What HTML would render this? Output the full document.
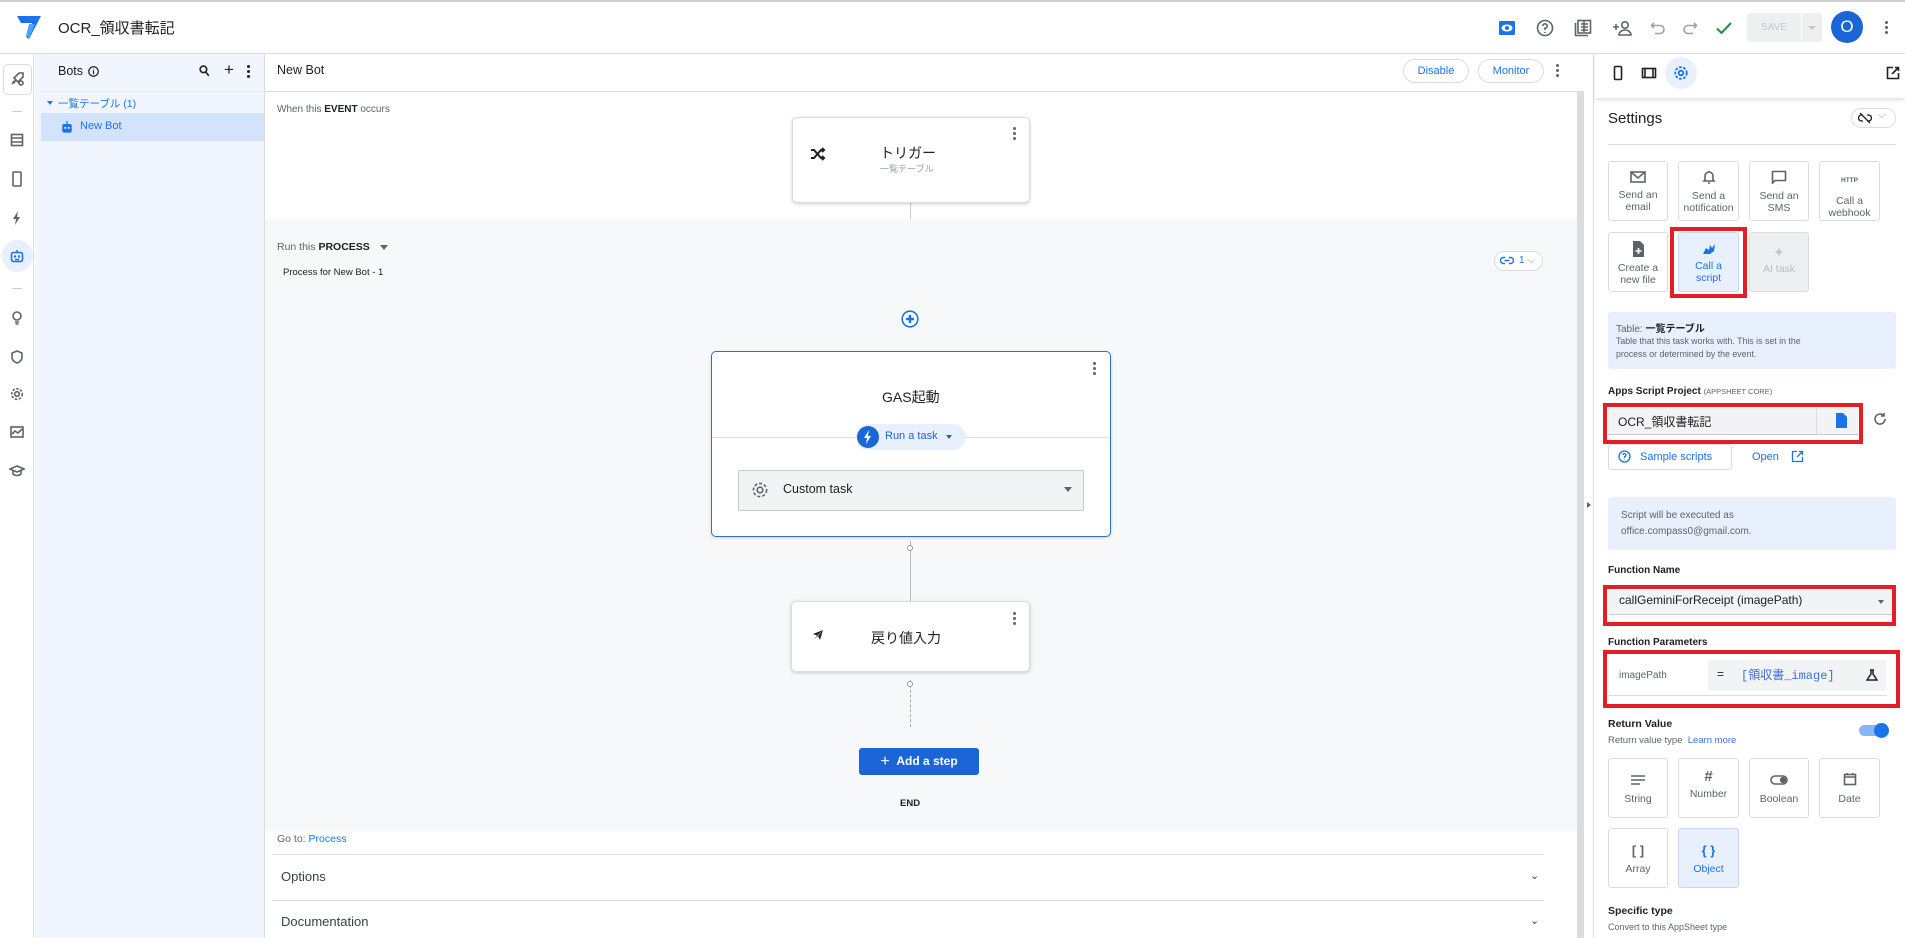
<!DOCTYPE html>
<html><head><meta charset="utf-8">
<style>
*{box-sizing:border-box;margin:0;padding:0}
body{width:1905px;height:938px;overflow:hidden;background:#fff;font-family:"Liberation Sans","Noto Sans CJK JP",sans-serif;color:#202124;position:relative;font-size:12px}
.a{position:absolute}
.ic{position:absolute;fill:none;stroke:#5f6368;stroke-width:1.6}
.tile{position:absolute;width:60px;height:60px;border:1px solid #dadce0;border-radius:3px;background:#fff;text-align:center;font-size:10.5px;color:#5f6368;line-height:12px}
.tile svg{display:block;margin:10px auto 4px}
.red{position:absolute;border:4px solid #e41e26}
.card{position:absolute;background:#fff;border:1px solid #dadce0;border-radius:5px;box-shadow:0 1px 3px rgba(0,0,0,.2)}
.kb{position:absolute;width:3px}
.kb i{display:block;width:3px;height:3px;border-radius:50%;background:#5f6368;margin-bottom:2px}
</style></head><body>
<div class="a" style="left:0;top:0;width:1905px;height:2px;background:#d0d0d0"></div>
<!-- top bar -->
<svg class="a" style="left:16px;top:15px" width="26" height="26" viewBox="0 0 26 26"><path d="M1 1h24l-12 23-3-2 6-14H5z" fill="#1a73e8"/><path d="M13 9h6l-6 14-3-2z" fill="#4fa3ff"/></svg>
<div class="a" style="left:58px;top:17px;font-size:15px">OCR_領収書転記</div>
<div class="a" style="left:0;top:53px;width:1905px;height:1px;background:#dadce0"></div>
<svg class="a" style="left:1498px;top:19px" width="18" height="18" viewBox="0 0 18 18"><rect x="1" y="2" width="16" height="14" rx="1" fill="#1a73e8"/><ellipse cx="9" cy="9" rx="5.5" ry="3.5" fill="#fff"/><circle cx="9" cy="9" r="2" fill="#1a73e8"/></svg>
<svg class="ic" style="left:1536px;top:19px" width="18" height="18" viewBox="0 0 18 18"><circle cx="9" cy="9" r="7.5"/><path d="M6.8 7a2.2 2.2 0 1 1 2.2 2.2V11M9 13v1"/></svg>
<svg class="ic" style="left:1574px;top:19px" width="18" height="18" viewBox="0 0 18 18"><rect x="4" y="1.5" width="12.5" height="12.5"/><path d="M1.5 4v12.5H14M7 5h7M7 8h7M7 11h7M10 2v11"/></svg>
<svg class="ic" style="left:1612px;top:19px" width="22" height="18" viewBox="0 0 22 18"><circle cx="13" cy="6" r="3.2"/><path d="M7 16c0-3 3-5 6-5s6 2 6 5zM1 8h6M4 5v6"/></svg>
<svg class="ic" style="left:1650px;top:20px;stroke:#9aa0a6" width="16" height="16" viewBox="0 0 16 16"><path d="M4 3L1.5 5.5 4 8M1.5 5.5H10a4 4 0 0 1 0 8H5"/></svg>
<svg class="ic" style="left:1682px;top:20px;stroke:#9aa0a6" width="16" height="16" viewBox="0 0 16 16"><path d="M12 3l2.5 2.5L12 8M14.5 5.5H6a4 4 0 0 0 0 8h5"/></svg>
<svg class="ic" style="left:1715px;top:19px;stroke:#1e8e3e;stroke-width:2" width="18" height="18" viewBox="0 0 18 18"><path d="M2 9.5l4.5 4.5L16 4"/></svg>
<div class="a" style="left:1747px;top:13px;width:54px;height:29px;background:#eeeff1;border-radius:3px 0 0 3px;color:#c4c7c9;font-size:10px;line-height:29px;text-align:center">SAVE</div>
<div class="a" style="left:1802px;top:13px;width:20px;height:29px;background:#eeeff1;border-radius:0 3px 3px 0"></div>
<div class="a" style="left:1808px;top:26px;border:4px solid transparent;border-top-color:#c4c7c9"></div>
<div class="a" style="left:1831px;top:11px;width:32px;height:32px;border-radius:50%;background:#1a66d6;color:#fff;font-size:17px;line-height:32px;text-align:center">O</div>
<div class="kb" style="left:1885px;top:21px"><i></i><i></i><i></i></div>

<!-- left rail -->
<div class="a" style="left:0;top:54px;width:34px;height:884px;background:#fff;border-right:1px solid #e0e0e0"></div>
<div class="a" style="left:3px;top:64px;width:29px;height:31px;border:1px solid #dadce0;border-radius:5px"></div>
<svg class="ic" style="left:10px;top:72px" width="14" height="14" viewBox="0 0 14 14"><path d="M2 12l4-4M4 6l5-5h4v4l-5 5zM3 9l2 2"/><circle cx="11" cy="11" r="2"/></svg>
<div class="a" style="left:12px;top:111px;width:10px;height:1px;background:#ccc"></div>
<svg class="ic" style="left:10px;top:133px" width="14" height="14" viewBox="0 0 14 14"><rect x="1.5" y="1.5" width="11" height="11"/><path d="M1.5 5h11M1.5 9h11"/></svg>
<svg class="ic" style="left:11px;top:171px" width="12" height="16" viewBox="0 0 12 16"><rect x="2" y="1" width="8" height="14" rx="1"/></svg>
<svg class="a" style="left:12px;top:211px" width="10" height="14" viewBox="0 0 10 14"><path d="M6 0L1 8h3l-1 6 5-8H5z" fill="#5f6368"/></svg>
<div class="a" style="left:2px;top:240px;width:31px;height:32px;border-radius:16px;background:#e8f0fe"></div>
<svg class="a" style="left:10px;top:249px" width="14" height="14" viewBox="0 0 14 14"><rect x="1.5" y="3.5" width="11" height="9" rx="2" fill="none" stroke="#1a73e8" stroke-width="1.6"/><circle cx="5" cy="7.5" r="1.2" fill="#1a73e8"/><circle cx="9" cy="7.5" r="1.2" fill="#1a73e8"/><path d="M7 1v2.5M5 10.5h4" stroke="#1a73e8" stroke-width="1.4"/></svg>
<div class="a" style="left:12px;top:288px;width:10px;height:1px;background:#ccc"></div>
<svg class="ic" style="left:11px;top:311px" width="12" height="14" viewBox="0 0 12 14"><circle cx="6" cy="5" r="4"/><path d="M4 11h4M4.5 13h3"/></svg>
<svg class="ic" style="left:11px;top:350px" width="12" height="14" viewBox="0 0 12 14"><path d="M6 1l5 2v4c0 3-2 5-5 6-3-1-5-3-5-6V3z"/></svg>
<svg class="ic" style="left:10px;top:387px" width="14" height="14" viewBox="0 0 14 14"><circle cx="7" cy="7" r="2.3"/><circle cx="7" cy="7" r="5.3" stroke-dasharray="2.5 1.5"/></svg>
<svg class="ic" style="left:10px;top:425px" width="14" height="14" viewBox="0 0 14 14"><rect x="1" y="2" width="12" height="10"/><path d="M2 9l3-3 3 2 4-4"/></svg>
<svg class="ic" style="left:9px;top:464px" width="16" height="14" viewBox="0 0 16 14"><path d="M1 5l7-3 7 3-7 3zM4 6.5v3.5c2 2 6 2 8 0V6.5"/></svg>

<!-- bots panel -->
<div class="a" style="left:35px;top:54px;width:230px;height:884px;background:#f1f5fd;border-right:1px solid #dadce0"></div>
<div class="a" style="left:58px;top:64px;font-size:12.5px">Bots</div>
<svg class="ic" style="left:88px;top:66px;stroke:#202124;stroke-width:1.1" width="11" height="11" viewBox="0 0 10 10"><circle cx="5" cy="5" r="4.3"/><path d="M5 4v3.5M5 2.5v.6"/></svg>
<svg class="ic" style="left:199px;top:65px;stroke:#202124;stroke-width:1.5" width="11" height="12" viewBox="0 0 10 11"><circle cx="4" cy="4" r="3"/><path d="M6.2 6.5L9 10"/></svg>
<div class="a" style="left:224px;top:60px;font-size:17px">+</div>
<div class="kb" style="left:247px;top:65px"><i style="background:#202124"></i><i style="background:#202124"></i><i style="background:#202124"></i></div>
<div class="a" style="left:35px;top:91px;width:230px;height:1px;background:#e6ebf4"></div>
<div class="a" style="left:47px;top:101px;border:3px solid transparent;border-top:4px solid #1a73e8"></div>
<div class="a" style="left:58px;top:96px;font-size:10.5px;color:#1a73e8">一覧テーブル (1)</div>
<div class="a" style="left:41px;top:113px;width:223px;height:28px;background:#d3e3fd"></div>
<svg class="a" style="left:61px;top:121px" width="12" height="12" viewBox="0 0 14 14"><rect x="1.5" y="3.5" width="11" height="10" rx="2" fill="#1a73e8"/><circle cx="5" cy="8" r="1.2" fill="#fff"/><circle cx="9" cy="8" r="1.2" fill="#fff"/><path d="M7 0v3.5" stroke="#1a73e8" stroke-width="1.4"/></svg>
<div class="a" style="left:80px;top:120px;font-size:11px;color:#1a73e8">New Bot</div>

<!-- main -->
<div class="a" style="left:277px;top:63px;font-size:12.5px">New Bot</div>
<div class="a" style="left:1403px;top:59px;width:66px;height:24px;border:1px solid #dadce0;border-radius:12px;color:#1a73e8;font-size:11px;line-height:22px;text-align:center">Disable</div>
<div class="a" style="left:1478px;top:59px;width:66px;height:24px;border:1px solid #dadce0;border-radius:12px;color:#1a73e8;font-size:11px;line-height:22px;text-align:center">Monitor</div>
<div class="kb" style="left:1556px;top:64px"><i></i><i></i><i></i></div>
<div class="a" style="left:265px;top:91px;width:1319px;height:1px;background:#dadce0"></div>
<div class="a" style="left:277px;top:104px;font-size:10px;color:#5f6368">When this <b style="color:#202124">EVENT</b> occurs</div>
<div class="a" style="left:265px;top:219px;width:1312px;height:612px;background:#f7f8fa"></div>
<div class="a" style="left:1577px;top:92px;width:7px;height:846px;background:#dadce0"></div>
<div class="a" style="left:1584px;top:54px;width:10px;height:884px;background:#fff;border-right:1px solid #dadce0"></div>
<div class="a" style="left:1587px;top:502px;border:3px solid transparent;border-left:4px solid #5f6368"></div>

<div class="a" style="left:910px;top:203px;width:1px;height:16px;background:#ccc"></div>
<div class="card" style="left:792px;top:117px;width:238px;height:86px"></div>
<div class="kb" style="left:1013px;top:127px"><i></i><i></i><i></i></div>
<svg class="a" style="left:810px;top:147px" width="16" height="14" viewBox="0 0 16 14"><path d="M1 3h3l7 8h3M1 11h3l7-8h3M12 1l2 2-2 2M12 9l2 2-2 2" fill="none" stroke="#202124" stroke-width="2"/></svg>
<div class="a" style="left:880px;top:143px;font-size:14px">トリガー</div>
<div class="a" style="left:880px;top:162px;font-size:9px;color:#9aa0a6">一覧テーブル</div>

<div class="a" style="left:277px;top:241px;font-size:10.5px;color:#5f6368">Run this <b style="color:#202124">PROCESS</b></div>
<div class="a" style="left:380px;top:245px;border:4px solid transparent;border-top:5px solid #5f6368"></div>
<div class="a" style="left:283px;top:267px;font-size:9.5px;color:#202124">Process for New Bot - 1</div>
<div class="a" style="left:1494px;top:251px;width:49px;height:20px;border:1px solid #dadce0;border-radius:10px;background:#fff;font-size:10px;color:#1a73e8;line-height:18px;padding-left:24px">1 <span style="color:#9aa0a6">⌵</span></div>
<svg class="a" style="left:1500px;top:256px" width="14" height="9" viewBox="0 0 14 9"><path d="M5 1.5H3.5a3 3 0 0 0 0 6H5M9 1.5h1.5a3 3 0 0 1 0 6H9M4.5 4.5h5" fill="none" stroke="#1a73e8" stroke-width="1.4"/></svg>
<svg class="a" style="left:901px;top:310px" width="18" height="18" viewBox="0 0 18 18"><circle cx="9" cy="9" r="7.8" fill="#fff" stroke="#1a73e8" stroke-width="1.6"/><path d="M9 5v8M5 9h8" stroke="#1a73e8" stroke-width="2.4"/></svg>

<div class="a" style="left:711px;top:351px;width:400px;height:186px;background:#fff;border:1.5px solid #2e6fd1;border-radius:5px;box-shadow:0 1px 3px rgba(0,0,0,.15)"></div>
<div class="kb" style="left:1093px;top:362px"><i></i><i></i><i></i></div>
<div class="a" style="left:712px;top:437px;width:398px;height:1px;background:#e0e0e0"></div>
<div class="a" style="left:882px;top:387px;font-size:14px">GAS起動</div>
<div class="a" style="left:856px;top:424px;width:110px;height:26px;border-radius:13px;background:#e8f0fe"></div>
<div class="a" style="left:857px;top:426px;width:22px;height:22px;border-radius:50%;background:#1a66d6"></div>
<svg class="a" style="left:863px;top:430px" width="10" height="14" viewBox="0 0 10 14"><path d="M6 0L1 8h3l-1 6 5-8H5z" fill="#fff"/></svg>
<div class="a" style="left:885px;top:430px;font-size:11px;color:#1a66d6">Run a task</div>
<div class="a" style="left:946px;top:435px;border:3.5px solid transparent;border-top:4px solid #1a66d6"></div>
<div class="a" style="left:738px;top:470px;width:346px;height:41px;background:#f1f3f4;border:1px solid #c8c8c8;border-radius:2px"></div>
<svg class="ic" style="left:751px;top:481px" width="18" height="18" viewBox="0 0 18 18"><circle cx="9" cy="9" r="2.8"/><circle cx="9" cy="9" r="6.6" stroke-dasharray="3 2"/></svg>
<div class="a" style="left:783px;top:482px;font-size:12.5px">Custom task</div>
<div class="a" style="left:1064px;top:487px;border:4px solid transparent;border-top:5px solid #5f6368"></div>

<div class="a" style="left:910px;top:541px;width:1px;height:60px;background:#bbb"></div>
<div class="a" style="left:907px;top:545px;width:6px;height:6px;border:1px solid #999;border-radius:50%;background:#fff"></div>
<div class="card" style="left:791px;top:601px;width:239px;height:71px"></div>
<div class="kb" style="left:1013px;top:612px"><i></i><i></i><i></i></div>
<svg class="a" style="left:812px;top:629px" width="12" height="12" viewBox="0 0 12 12"><path d="M1 11L11 1 8 11 6 7 1 11z M11 1L1 5l5 2" fill="#202124"/></svg>
<div class="a" style="left:871px;top:628px;font-size:14px">戻り値入力</div>
<div class="a" style="left:910px;top:680px;width:0;height:47px;border-left:1px dashed #aaa"></div>
<div class="a" style="left:907px;top:681px;width:6px;height:6px;border:1px solid #999;border-radius:50%;background:#fff"></div>
<div class="a" style="left:859px;top:748px;width:120px;height:27px;background:#1a66d6;border-radius:3px;color:#fff;font-size:12px;font-weight:bold;line-height:27px;text-align:center"><span style="font-size:16px;font-weight:normal;vertical-align:-1px">+</span>&nbsp;&nbsp;Add a step</div>
<div class="a" style="left:900px;top:798px;font-size:9.5px;font-weight:bold">END</div>
<div class="a" style="left:277px;top:833px;font-size:10.5px;color:#5f6368">Go to: <span style="color:#1a73e8">Process</span></div>
<div class="a" style="left:272px;top:854px;width:1272px;height:1px;background:#e0e0e0"></div>
<div class="a" style="left:281px;top:869px;font-size:13px;color:#3c4043">Options</div>
<div class="a" style="left:1530px;top:869px;font-size:11px;color:#3c4043">⌄</div>
<div class="a" style="left:272px;top:900px;width:1272px;height:1px;background:#e0e0e0"></div>
<div class="a" style="left:281px;top:914px;font-size:13px;color:#3c4043">Documentation</div>
<div class="a" style="left:1530px;top:914px;font-size:11px;color:#3c4043">⌄</div>

<!-- right panel -->
<div class="a" style="left:1595px;top:54px;width:310px;height:44px;background:#fff;box-shadow:0 2px 3px rgba(0,0,0,.12)"></div>
<svg class="ic" style="left:1612px;top:65px;stroke:#202124" width="12" height="16" viewBox="0 0 12 16"><rect x="2.5" y="1.5" width="7" height="13" rx="1"/></svg>
<svg class="ic" style="left:1641px;top:67px;stroke:#202124" width="16" height="12" viewBox="0 0 16 12"><rect x="1.5" y="1.5" width="13" height="9"/><path d="M4 1.5v9M12 1.5v9"/></svg>
<div class="a" style="left:1665px;top:57px;width:32px;height:32px;border-radius:50%;background:#e8f0fe"></div>
<svg class="ic" style="left:1673px;top:65px;stroke:#1a73e8;stroke-width:1.8" width="16" height="16" viewBox="0 0 16 16"><circle cx="8" cy="8" r="2.3"/><circle cx="8" cy="8" r="5.8" stroke-dasharray="2.6 1.6"/></svg>
<svg class="ic" style="left:1886px;top:66px;stroke:#202124" width="14" height="14" viewBox="0 0 14 14"><path d="M12.5 7v5.5h-11v-11H7M9 1.5h3.5V5M12.5 1.5L6 8"/></svg>
<div class="a" style="left:1608px;top:110px;font-size:15px">Settings</div>
<div class="a" style="left:1851px;top:108px;width:45px;height:20px;border:1px solid #dadce0;border-radius:10px"></div>
<svg class="ic" style="left:1858px;top:112px;stroke:#202124;stroke-width:1.3" width="14" height="12" viewBox="0 0 14 12"><path d="M5 3H3.5a3 3 0 0 0 0 6H5M9 3h1.5a3 3 0 0 1 0 6H9M2 1l10 10"/></svg>
<div class="a" style="left:1878px;top:110px;font-size:10px;color:#9aa0a6">⌵</div>
<div class="a" style="left:1608px;top:144px;width:288px;height:1px;background:#dadce0"></div>

<div class="tile" style="left:1608px;top:161px"><svg class="ic" style="position:static;display:block;margin:9px auto 6px" width="16" height="12" viewBox="0 0 16 12"><rect x="1" y="1" width="14" height="10"/><path d="M1 1l7 6 7-6"/></svg>Send an<br>email</div>
<div class="tile" style="left:1678px;top:161px;width:61px"><svg class="ic" style="position:static;display:block;margin:8px auto 6px" width="14" height="14" viewBox="0 0 14 14"><path d="M3 10V6a4 4 0 0 1 8 0v4l1 1H2zM6 13h2M7 1v1"/></svg>Send a<br>notification</div>
<div class="tile" style="left:1749px;top:161px"><svg class="ic" style="position:static;display:block;margin:8px auto 6px" width="16" height="14" viewBox="0 0 16 14"><path d="M1.5 1.5h13v9H4l-2.5 2.5z"/></svg>Send an<br>SMS</div>
<div class="tile" style="left:1819px;top:161px;width:61px"><div style="font-size:6.5px;font-weight:bold;margin:13px 0 8px;color:#5f6368">HTTP</div>Call a<br>webhook</div>
<div class="tile" style="left:1608px;top:232px"><svg style="display:block;margin:8px auto 5px" width="12" height="16" viewBox="0 0 12 16"><path d="M1 0h7l4 4v12H1z" fill="#5f6368"/><path d="M6.5 7v6M3.5 10h6" stroke="#fff" stroke-width="1.6"/></svg>Create a<br>new file</div>
<div class="tile" style="left:1678px;top:232px;width:61px;background:#e8f0fe;border-color:#c6d6f3;color:#1a73e8"><svg style="display:block;margin:10px auto 5px" width="14" height="12" viewBox="0 0 14 12"><path d="M1 11l3-6 3 2 1-5 2 3 3-4-1 7-4 3z" fill="#1a73e8"/></svg>Call a<br>script</div>
<div class="tile" style="left:1749px;top:232px;background:#eeeff1;color:#bdbdbd"><div style="font-size:14px;margin:13px 0 5px;color:#c4c4c4">✦</div>AI task</div>
<div class="red" style="left:1670px;top:227px;width:77px;height:71px"></div>

<div class="a" style="left:1608px;top:312px;width:288px;height:57px;background:#e8f0fe;border-radius:3px"></div>
<div class="a" style="left:1616px;top:320px;font-size:10px;color:#5f6368">Table: <b style="color:#202124">一覧テーブル</b></div>
<div class="a" style="left:1616px;top:335px;font-size:8.8px;color:#5f6368;line-height:13px">Table that this task works with. This is set in the<br>process or determined by the event.</div>
<div class="a" style="left:1608px;top:386px;font-size:10px;color:#202124;font-weight:bold">Apps Script Project <span style="font-weight:normal;font-size:7.5px;color:#5f6368">(APPSHEET CORE)</span></div>
<div class="a" style="left:1608px;top:408px;width:250px;height:27px;background:#f1f3f4;border-bottom:1px solid #ccc"></div>
<div class="a" style="left:1816px;top:408px;width:1px;height:27px;background:#ddd"></div>
<div class="a" style="left:1618px;top:413px;font-size:12px">OCR_領収書転記</div>
<svg class="a" style="left:1835px;top:413px" width="12" height="15" viewBox="0 0 12 15"><path d="M1 0h7l4 4v11H1z" fill="#1a73e8"/></svg>
<div class="red" style="left:1603px;top:403px;width:260px;height:41px"></div>
<svg class="ic" style="left:1873px;top:412px;stroke:#5f6368;stroke-width:1.6" width="14" height="14" viewBox="0 0 14 14"><path d="M12 7a5 5 0 1 1-1.5-3.5M11 1v3h-3"/></svg>
<div class="a" style="left:1608px;top:444px;width:124px;height:26px;border:1px solid #dadce0;border-radius:3px"></div>
<svg class="ic" style="left:1618px;top:450px;stroke:#1a73e8;stroke-width:1.3" width="13" height="13" viewBox="0 0 13 13"><circle cx="6.5" cy="6.5" r="5.5"/><path d="M5 5a1.5 1.5 0 1 1 1.5 1.5V8M6.5 9.5v.5"/></svg>
<div class="a" style="left:1640px;top:451px;font-size:11px;color:#1a73e8">Sample scripts</div>
<div class="a" style="left:1752px;top:451px;font-size:11px;color:#1a73e8">Open</div>
<svg class="ic" style="left:1791px;top:450px;stroke:#1a73e8;stroke-width:1.3" width="13" height="13" viewBox="0 0 13 13"><path d="M11.5 7v4.5h-10v-10H6M8 1.5h3.5V5M11.5 1.5L6 7"/></svg>

<div class="a" style="left:1608px;top:497px;width:288px;height:53px;background:#e8f0fe;border-radius:3px"></div>
<div class="a" style="left:1621px;top:508px;font-size:10px;color:#5f6368;line-height:16px">Script will be executed as<br>office.compass0@gmail.com.</div>
<div class="a" style="left:1608px;top:565px;font-size:10px;font-weight:bold">Function Name</div>
<div class="a" style="left:1609px;top:590px;width:283px;height:25px;background:#f1f3f4;border-bottom:1px solid #ccc"></div>
<div class="a" style="left:1619px;top:593px;font-size:12px">callGeminiForReceipt (imagePath)</div>
<div class="a" style="left:1878px;top:600px;border:3.5px solid transparent;border-top:4px solid #5f6368"></div>
<div class="red" style="left:1603px;top:585px;width:293px;height:41px"></div>
<div class="a" style="left:1608px;top:637px;font-size:10px;font-weight:bold">Function Parameters</div>
<div class="a" style="left:1609px;top:656px;width:278px;height:40px;border-bottom:1px solid #ddd"></div>
<div class="a" style="left:1619px;top:670px;font-size:10px;color:#5f6368">imagePath</div>
<div class="a" style="left:1708px;top:660px;width:178px;height:31px;background:#f1f3f4;border-radius:2px"></div>
<div class="a" style="left:1717px;top:667px;font-size:12px">=</div>
<div class="a" style="left:1741px;top:666px;font-size:12px;color:#3c6fd8;font-family:'Liberation Mono','Noto Sans CJK JP',monospace">[領収書_image]</div>
<svg class="a" style="left:1866px;top:669px" width="12" height="12" viewBox="0 0 12 12"><path d="M4 1h4M5 1v4l-4 6h10L7 5V1" fill="none" stroke="#202124" stroke-width="1.5"/></svg>
<div class="red" style="left:1603px;top:650px;width:297px;height:58px"></div>

<div class="a" style="left:1608px;top:718px;font-size:10.5px;font-weight:bold">Return Value</div>
<div class="a" style="left:1608px;top:735px;font-size:9.5px;color:#5f6368">Return value type&nbsp; <span style="color:#3c6fd8">Learn more</span></div>
<div class="a" style="left:1859px;top:725px;width:26px;height:11px;border-radius:6px;background:#8ab4f8"></div>
<div class="a" style="left:1874px;top:723px;width:15px;height:15px;border-radius:50%;background:#1a73e8"></div>

<div class="tile" style="left:1608px;top:758px"><svg class="ic" style="position:static;display:block;margin:16px auto 8px" width="16" height="10" viewBox="0 0 16 10"><path d="M1 1h14M1 5h14M1 9h9"/></svg>String</div>
<div class="tile" style="left:1678px;top:758px;width:61px"><div style="font-size:15px;font-weight:bold;margin:12px 0 5px">#</div>Number</div>
<div class="tile" style="left:1749px;top:758px"><svg class="ic" style="position:static;display:block;margin:16px auto 8px" width="18" height="10" viewBox="0 0 18 10"><rect x="1" y="1" width="16" height="8" rx="4"/><circle cx="13" cy="5" r="2.3" fill="#5f6368"/></svg>Boolean</div>
<div class="tile" style="left:1819px;top:758px;width:61px"><svg class="ic" style="position:static;display:block;margin:13px auto 7px" width="14" height="14" viewBox="0 0 14 14"><rect x="1.5" y="2.5" width="11" height="10"/><path d="M1.5 5h11M4 1v2M10 1v2"/></svg>Date</div>
<div class="tile" style="left:1608px;top:828px"><div style="font-size:13px;font-weight:bold;margin:16px 0 6px;color:#5f6368">[ ]</div>Array</div>
<div class="tile" style="left:1678px;top:828px;width:61px;background:#e8f0fe;border-color:#c6d6f3;color:#1a73e8"><div style="font-size:13px;font-weight:bold;margin:16px 0 6px">{ }</div>Object</div>
<div class="a" style="left:1608px;top:905px;font-size:10.5px;font-weight:bold">Specific type</div>
<div class="a" style="left:1608px;top:922px;font-size:9px;color:#5f6368">Convert to this AppSheet type</div>
</body></html>
